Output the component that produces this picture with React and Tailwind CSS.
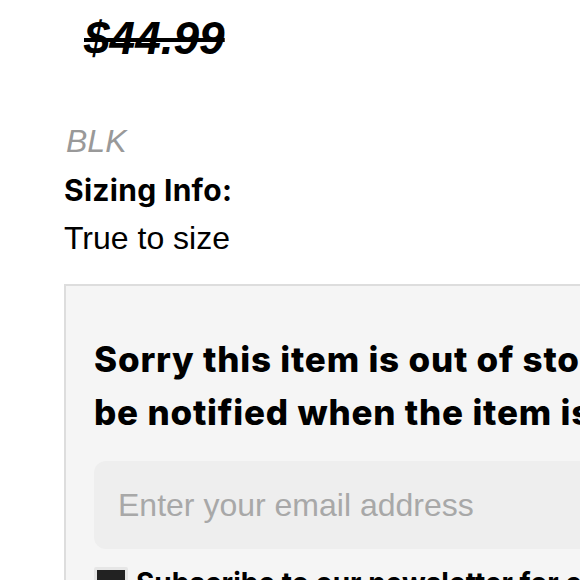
import React from 'react'

const arial = { fontFamily: '"Liberation Sans", Arial, sans-serif' }
const heavy = { fontFamily: 'Inter, "Noto Sans", sans-serif' }

function App() {
  return (
    <div className="w-[580px] h-[580px] overflow-hidden bg-white">
      <div className="w-[800px] pl-[64px] pt-[10px]">
        <div className="pl-[20px] text-[46px] leading-[56px] font-bold italic line-through text-black" style={arial}>
          $44.99
        </div>

        <div className="mt-[55px] pl-[2px] text-[32px] leading-[40px] italic text-[#999999]" style={arial}>
          BLK
        </div>
        <div className="mt-[9px] text-[30px] leading-[40px] font-bold tracking-[0.3px] text-black" style={heavy}>
          Sizing Info:
        </div>
        <div className="mt-[6px] text-[32px] leading-[44px] text-black" style={arial}>
          True to size
        </div>

        <div className="mt-[24px] border-2 border-[#dddddd] bg-[#f5f5f5] px-[28px] pt-[47px] pb-[40px]">
          <h2 className="text-[35px] leading-[53px] font-extrabold tracking-[0.8px] text-black whitespace-nowrap" style={heavy}>
            Sorry this item is out of stock. Sign up to
            <br />
            be notified when the item is back in stock.
          </h2>
          <input
            type="email"
            placeholder="Enter your email address"
            className="mt-[22px] block w-full h-[88px] rounded-[12px] bg-[#eeeeee] px-[24px] text-[32px] outline-none placeholder:text-[#a8a8a8]"
            style={arial}
          />
          <label className="mt-[16px] flex items-start gap-[8px] text-[28px] leading-[36px] font-bold text-black" style={heavy}>
            <span className="mt-[2px] inline-block shrink-0 w-[34px] h-[34px] border-[3px] border-[#e6e6e6] bg-[#222222] rounded-[2px]" />
            <span>Subscribe to our newsletter for exclusive offers</span>
          </label>
        </div>
      </div>
    </div>
  )
}

export default App
